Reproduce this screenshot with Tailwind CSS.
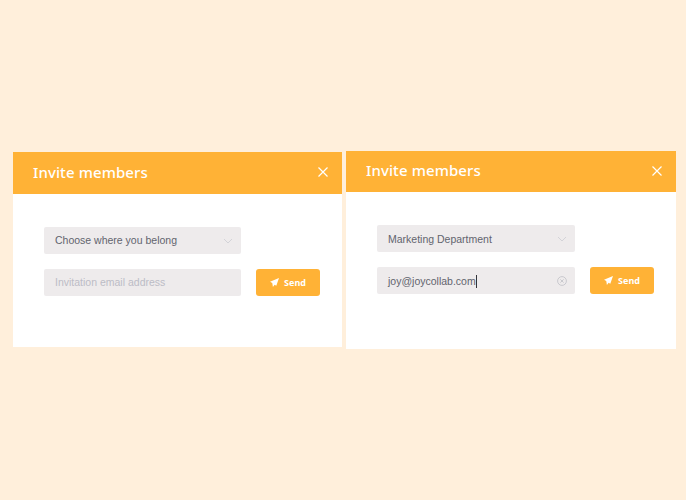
<!DOCTYPE html>
<html lang="en">
<head>
    <meta charset="UTF-8">
    <title>Invite members</title>
    <script src="https://cdn.jsdelivr.net/npm/@tailwindcss/browser@4"></script>
</head>
<body class="bg-[#ffefdb] h-[500px] overflow-hidden font-['Liberation_Sans',sans-serif]">
    <div class="flex items-start pl-[13px] pt-[151px] gap-[4px]">
        <!-- Empty state -->
        <section class="bg-white w-[329px] h-[195px] mt-[1px]">
            <header class="bg-[#ffb236] h-[41.5px] pl-[20px] pr-[13px] pb-[2px] flex items-center justify-between">
                <h2 class="text-white text-[15px] font-medium tracking-[0.1px] font-['Noto_Sans',sans-serif]">Invite members</h2>
                <svg width="12" height="12" viewBox="0 0 12 12" fill="none" stroke="white" stroke-width="1.2"><path d="M1.5 1.5l9 9M10.5 1.5l-9 9"/></svg>
            </header>
            <div class="pl-[31px] pt-[33.5px] flex flex-col gap-[15px]">
                <div class="w-[197px] h-[27px] bg-[#eeebec] rounded-[2px] pl-[11px] pr-[8px] flex items-center justify-between">
                    <span class="text-[#62646e] text-[10.5px] leading-[13px]">Choose where you belong</span>
                    <svg width="10" height="6" viewBox="0 0 10 6" fill="none" stroke="#d3d3d8" stroke-width="1"><path d="M1 1l4 4 4-4"/></svg>
                </div>
                <div class="flex items-center gap-[15px]">
                    <div class="w-[197px] h-[27px] bg-[#eeebec] rounded-[2px] pl-[11px] flex items-center">
                        <span class="text-[#bcbcc6] text-[10.5px]">Invitation email address</span>
                    </div>
                    <button class="w-[64px] h-[27px] bg-[#ffb236] rounded-[3px] flex items-center justify-center gap-[5px] text-white text-[9px] font-bold font-['Noto_Sans',sans-serif]">
                        <svg width="9" height="9" viewBox="0 0 8 8" fill="white"><path d="M8 0L0 3.4l2 1.1L2.6 8l1.5-2 1.5.8z"/></svg>
                        Send
                    </button>
                </div>
            </div>
        </section>
        <!-- Filled state -->
        <section class="bg-white w-[330px] h-[198px]">
            <header class="bg-[#ffb236] h-[41px] pl-[20px] pr-[13px] pb-[2px] flex items-center justify-between">
                <h2 class="text-white text-[15px] font-medium tracking-[0.1px] font-['Noto_Sans',sans-serif]">Invite members</h2>
                <svg width="12" height="12" viewBox="0 0 12 12" fill="none" stroke="white" stroke-width="1.2"><path d="M1.5 1.5l9 9M10.5 1.5l-9 9"/></svg>
            </header>
            <div class="pl-[31px] pt-[33px] flex flex-col gap-[15px]">
                <div class="w-[198px] h-[27px] bg-[#eeebec] rounded-[2px] pl-[11px] pr-[8px] pt-[1px] flex items-center justify-between">
                    <span class="text-[#62646e] text-[10.5px] leading-[13px]">Marketing Department</span>
                    <svg width="10" height="6" viewBox="0 0 10 6" fill="none" stroke="#d3d3d8" stroke-width="1"><path d="M1 1l4 4 4-4"/></svg>
                </div>
                <div class="flex items-center gap-[15px]">
                    <div class="w-[198px] h-[27px] bg-[#eeebec] rounded-[2px] pl-[11px] pr-[8px] pt-[1px] flex items-center justify-between">
                        <span class="text-[#62646e] text-[10.5px] border-r border-[#33343a] leading-[13px]">joy@joycollab.com</span>
                        <svg width="10" height="10" viewBox="0 0 10 10" fill="none" stroke="#c9c9ce" stroke-width="1"><circle cx="5" cy="5" r="4.4"/><path d="M3.4 3.4l3.2 3.2M6.6 3.4L3.4 6.6"/></svg>
                    </div>
                    <button class="w-[64px] h-[27px] bg-[#ffb236] rounded-[3px] flex items-center justify-center gap-[5px] text-white text-[9px] font-bold font-['Noto_Sans',sans-serif]">
                        <svg width="9" height="9" viewBox="0 0 8 8" fill="white"><path d="M8 0L0 3.4l2 1.1L2.6 8l1.5-2 1.5.8z"/></svg>
                        Send
                    </button>
                </div>
            </div>
        </section>
    </div>
</body>
</html>
